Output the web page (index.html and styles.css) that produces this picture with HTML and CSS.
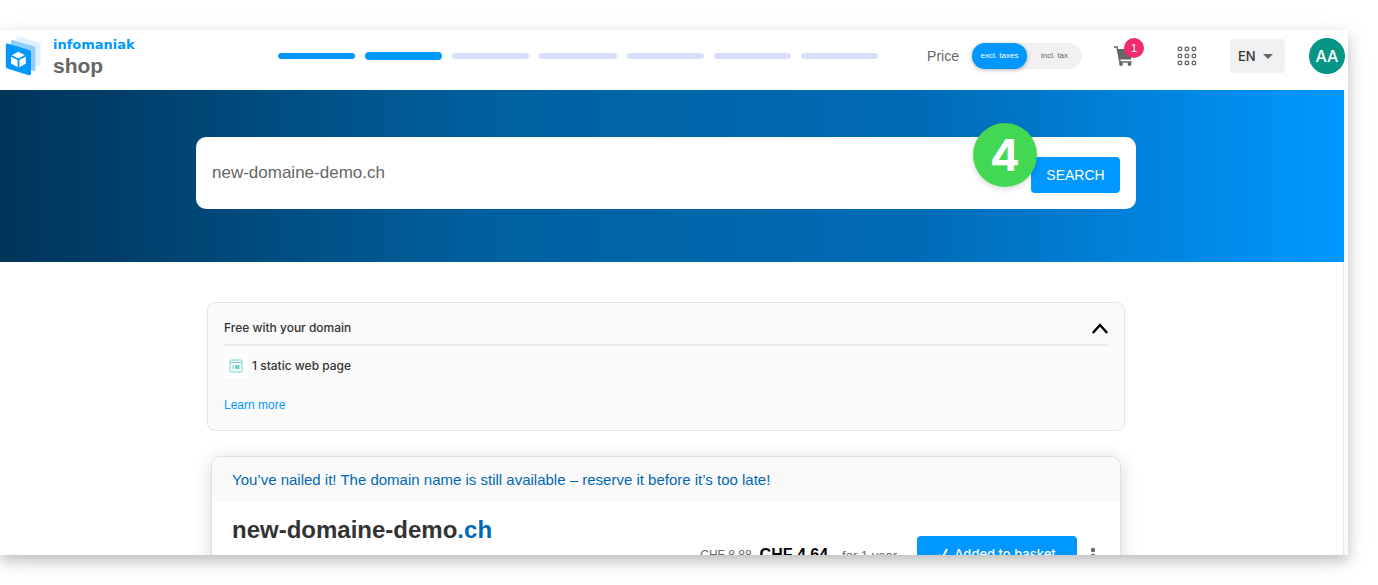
FILE: index.html
```html
<!DOCTYPE html>
<html lang="en">
<head>
  <meta charset="UTF-8">
  <title>infomaniak shop</title>
  <link rel="stylesheet" href="styles.css">
</head>
<body>
  <div class="window">
    <header class="topbar">
      <a class="logo" href="#">
        <svg width="36" height="40" viewBox="0 0 36 40" aria-hidden="true">
          <path d="M11.500 1.200Q11.500 0 13 .4L34 6.600Q35.500 7.100 35.500 8.600V29.500Q35.500 31.200 34 30.800L11.500 24Z" fill="#e0f2ff"/>
          <path d="M6 4.800Q6 3.500 7.500 3.900L29 10.300Q30.500 10.800 30.500 12.300V33.500Q30.500 35.500 29 35L6 28Z" fill="#8fcfff"/>
          <path d="M.8 9Q.8 7 2.600 7.500L24 14Q26 14.600 26 16.500V37.500Q26 39.700 24 39.200L2.800 32.800Q.8 32.200 .8 30Z" fill="#0098ff"/>
          <path d="M13.200 15.800L19.800 19L13.500 22.400L6.800 19.200ZM6 20.800L12.600 24V31.200L6 27.600ZM14.400 24L20.800 20.600V27.800L14.400 31.200Z" fill="#fff"/>
        </svg>
        <span class="logo-text">
          <span class="logo-brand">infomaniak</span>
          <span class="logo-name">shop</span>
        </span>
      </a>

      <ol class="steps" aria-label="Order progress">
        <li class="step done"></li>
        <li class="step current"></li>
        <li class="step"></li>
        <li class="step"></li>
        <li class="step"></li>
        <li class="step"></li>
        <li class="step"></li>
      </ol>

      <div class="tools">
        <span class="price-label" id="price-label">Price</span>
        <div class="tax-switch" role="radiogroup" aria-labelledby="price-label">
          <input type="radio" name="tax" id="tax-excl" checked>
          <label for="tax-excl">excl. taxes</label>
          <input type="radio" name="tax" id="tax-incl">
          <label for="tax-incl">incl. tax</label>
        </div>
        <button class="cart" type="button" aria-label="Basket">
          <svg width="20" height="22" viewBox="0 0 20 22" aria-hidden="true">
            <path d="M3 4H19L17 14.500H5.500Z" fill="#666"/>
            <path d="M0 2H3L6 17H17.500" fill="none" stroke="#666" stroke-width="1.600"/>
            <circle cx="7" cy="19" r="1.900" fill="#666"/>
            <circle cx="15.500" cy="19" r="1.900" fill="#666"/>
          </svg>
          <span class="cart-count">1</span>
        </button>
        <button class="apps" type="button" aria-label="Applications">
          <svg width="20" height="20" viewBox="0 0 20 20" fill="none" stroke="#666" stroke-width="1.300" aria-hidden="true">
            <rect x="1.200" y="1.200" width="3.400" height="3.400" rx="1.200"/>
            <rect x="8.200" y="1.200" width="3.400" height="3.400" rx="1.200"/>
            <rect x="15.200" y="1.200" width="3.400" height="3.400" rx="1.200"/>
            <rect x="1.200" y="8.200" width="3.400" height="3.400" rx="1.200"/>
            <rect x="8.200" y="8.200" width="3.400" height="3.400" rx="1.200"/>
            <rect x="15.200" y="8.200" width="3.400" height="3.400" rx="1.200"/>
            <rect x="1.200" y="15.200" width="3.400" height="3.400" rx="1.200"/>
            <rect x="8.200" y="15.200" width="3.400" height="3.400" rx="1.200"/>
            <rect x="15.200" y="15.200" width="3.400" height="3.400" rx="1.200"/>
          </svg>
        </button>
        <div class="lang">
          <select aria-label="Language">
            <option>EN</option>
            <option>FR</option>
            <option>DE</option>
          </select>
          <svg class="lang-arrow" width="10" height="5" viewBox="0 0 10 5" aria-hidden="true"><path d="M0 0H10L5 5Z" fill="#666"/></svg>
        </div>
        <button class="avatar" type="button" aria-label="Account">AA</button>
      </div>
    </header>

    <div class="page">
      <section class="hero">
        <form class="search">
          <input type="text" value="new-domaine-demo.ch" aria-label="Domain name">
          <div class="search-action">
            <button type="submit">SEARCH</button>
            <span class="marker">4</span>
          </div>
        </form>
      </section>

      <main class="results">
        <section class="free">
          <div class="free-head">
            <h2>Free with your domain</h2>
            <button type="button" aria-label="Collapse">
              <svg width="16" height="11" viewBox="0 0 16 11" aria-hidden="true"><path d="M1.500 9.300L8 2L14.500 9.300" fill="none" stroke="#000" stroke-width="2.400" stroke-linecap="round"/></svg>
            </button>
          </div>
          <div class="free-item">
            <span class="free-icon">
              <svg width="14" height="14" viewBox="0 0 14 14" fill="none" stroke="#6fd3cb" aria-hidden="true">
                <rect x="1" y="1" width="12" height="12" rx="1"/>
                <path d="M1 3.500H13M4 6V10.500"/>
                <rect x="6" y="6" width="4.500" height="4" fill="#6fd3cb" stroke="none"/>
              </svg>
            </span>
            <span>1 static web page</span>
          </div>
          <a href="#">Learn more</a>
        </section>

        <section class="offer">
          <p class="offer-note">You’ve nailed it! The domain name is still available – reserve it before it’s too late!</p>
          <div class="offer-body">
            <h1>new-domaine-demo<span>.ch</span></h1>
            <div class="offer-buy">
              <s>CHF 8.88</s>
              <strong>CHF 4.64</strong>
              <span class="period">for 1 year</span>
              <button class="added" type="button">
                <svg width="12" height="12" viewBox="0 0 12 12" aria-hidden="true"><path d="M1 7L4 10.500L9 1" fill="none" stroke="#fff" stroke-width="2"/></svg>
                Added to basket
              </button>
              <button class="more" type="button" aria-label="More options">
                <svg width="6" height="20" viewBox="0 0 6 20" fill="#666" aria-hidden="true">
                  <circle cx="3" cy="6" r="2.200"/>
                  <circle cx="3" cy="12" r="2.200"/>
                  <circle cx="3" cy="18" r="2"/>
                </svg>
              </button>
            </div>
          </div>
        </section>
      </main>
    </div>
  </div>
</body>
</html>
```

FILE: styles.css
```css
* { box-sizing: border-box; }

body {
  margin: 0;
  height: 100vh;
  padding: 30px 30px 30px 0;
  overflow: hidden;
  background: #fff;
  color: #333;
  font-family: "Liberation Sans", Arial, sans-serif;
  font-size: 16px;
}

button, input, select { font: inherit; color: inherit; border: 0; margin: 0; padding: 0; background: none; }
button { cursor: pointer; }
svg { display: block; }
h1, h2, p { margin: 0; }
a { color: #0098ff; text-decoration: none; }

.window {
  height: 100%;
  overflow: hidden;
  background: #fafafa;
  box-shadow: 0 6px 12px rgba(0, 0, 0, 0.2), 0 6px 26px rgba(0, 0, 0, 0.08);
}

/* top bar */
.topbar { display: flex; align-items: center; height: 60px; padding: 0 3px 8px 5px; background: #fff; }
.logo { flex: 0 0 273px; display: flex; align-items: center; gap: 12px; }
.logo-text { display: flex; flex-direction: column; padding-top: 2px; }
.logo-brand { font-family: "DejaVu Sans", sans-serif; font-size: 13px; line-height: 18px; font-weight: bold; }
.logo-name { font-size: 21px; line-height: 24px; font-weight: bold; color: #666; }

.steps { flex: 1; display: flex; align-items: center; gap: 10px; max-width: 600px; margin: 0; padding: 0; list-style: none; }
.step { flex: 1; height: 6px; border-radius: 4px; background: #d6defc; }
.step.done, .step.current { background: #0098ff; }
.step.current { height: 8px; }

.tools { display: flex; align-items: center; margin-left: auto; color: #666; }
.price-label { font-size: 14px; }
.tax-switch { display: flex; height: 26px; margin-left: 13px; border-radius: 13px; background: #f1f1f1; font-size: 8px; }
.tax-switch input { position: absolute; opacity: 0; }
.tax-switch label { width: 55px; line-height: 26px; text-align: center; border-radius: 13px; }
.tax-switch input:checked + label { background: #0098ff; color: #fff; box-shadow: 0 1px 4px rgba(0, 0, 0, 0.3); }
.cart { position: relative; margin-left: 32px; }
.cart-count {
  position: absolute; top: -7px; left: 10px;
  width: 20px; height: 20px; border-radius: 50%;
  background: #ef2a6d; color: #fff; font-size: 11px; line-height: 20px;
}
.apps { margin-left: 43px; }
.lang { position: relative; margin-left: 33px; }
.lang select { width: 55px; height: 34px; padding-left: 8px; border-radius: 4px; background: #f1f1f1; color: #333; font-family: Inter, sans-serif; font-size: 13px; font-weight: 500; appearance: none; }
.lang-arrow { position: absolute; right: 12px; top: 15px; pointer-events: none; }
.avatar { width: 36px; height: 36px; margin-left: 24px; border-radius: 50%; background: #059686; color: #fff; font-family: Inter, sans-serif; font-size: 16px; font-weight: 500; }

/* search */
.page { min-height: 100%; margin-right: 4px; border-right: 1px solid #e8e8e8; background: #fff; }
.hero { margin-right: -1px; padding: 47px 12px 53px 0; background: linear-gradient(to right, #003459, #00609f 36%, #006bb5 68%, #0098ff); }
.search { display: flex; align-items: center; max-width: 940px; height: 72px; margin: 0 auto; padding: 0 16px; border-radius: 10px; background: #fff; }
.search > input { flex: 1; min-width: 0; color: #666; font-size: 17px; outline: 0; }
.search-action { position: relative; padding-top: 4px; }
.search-action button { width: 89px; height: 36px; border-radius: 4px; background: #0098ff; color: #fff; font-size: 14px; }
.marker {
  position: absolute; left: -58px; top: -30px;
  width: 64px; height: 64px; border-radius: 50%;
  background: #43d854; color: #fff;
  font-family: Inter, sans-serif; font-size: 44px; line-height: 64px; font-weight: bold; text-align: center;
  box-shadow: 0 2px 6px rgba(0, 0, 0, 0.16);
}

/* results */
.results { display: flex; flex-direction: column; align-items: center; gap: 25px; padding: 40px 11px 0 0; }
.free { width: 100%; max-width: 918px; padding: 9px 16px 17px; border: 1px solid #e5e5e5; border-radius: 8px; background: #fafafa; font-size: 12px; line-height: 16px; }
.free-head { display: flex; align-items: center; justify-content: space-between; height: 34px; border-bottom: 2px solid #e8e8e8; }
.free-head h2 { font-family: Inter, sans-serif; font-size: 12px; font-weight: 500; }
.free-item { display: flex; align-items: center; gap: 4px; height: 24px; margin: 8px 0 19px; font-family: Inter, sans-serif; font-weight: 500; }
.free-icon { display: grid; place-items: center; width: 24px; height: 24px; border-radius: 3px; background: #fff; }

.offer { width: 100%; max-width: 910px; border: 1px solid #e0e0e0; border-radius: 10px; background: #fff; box-shadow: 0 2px 18px rgba(0, 0, 0, 0.15); }
.offer-note { padding: 0 20px; border-radius: 9px 9px 0 0; background: #fafafa; color: #0068b4; font-size: 15px; line-height: 45px; }
.offer-body { display: flex; align-items: flex-start; justify-content: space-between; padding: 12px 24px 24px 20px; }
.offer-body h1 { font-size: 24px; line-height: 32px; }
.offer-body h1 span { color: #0068b4; }
.offer-buy { display: flex; align-items: center; margin-top: 22px; color: #666; font-size: 13px; }
.offer-buy s { padding-top: 2px; font-size: 12px; text-decoration: none; }
.offer-buy strong { margin-left: 8px; padding-top: 2px; color: #000; font-size: 16px; }
.period { margin-left: 14px; padding-top: 2px; }
.added { display: flex; align-items: center; justify-content: center; gap: 4px; width: 160px; height: 36px; margin-left: 20px; border-radius: 4px; background: #0098ff; color: #fff; font-family: Inter, sans-serif; font-size: 13px; font-weight: 500; }
.more { margin-left: 13px; }
```
